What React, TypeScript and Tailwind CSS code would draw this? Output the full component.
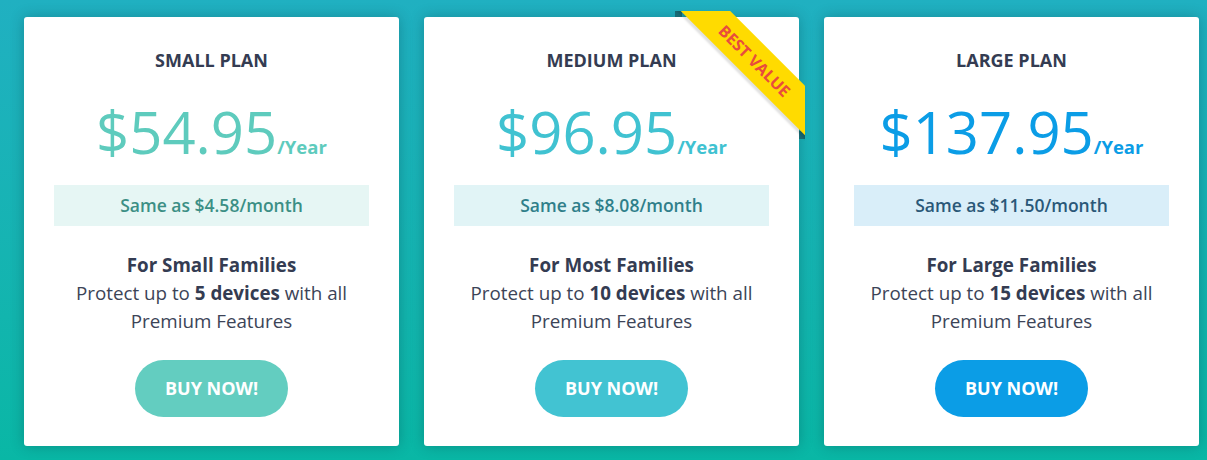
import React from "react";

type Plan = {
  name: string;
  price: string;
  month: string;
  family: string;
  devices: string;
  priceColor: string;
  boxBg: string;
  boxText: string;
  btn: string;
  ribbon?: boolean;
};

const plans: Plan[] = [
  {
    name: "SMALL PLAN",
    price: "$54.95",
    month: "Same as $4.58/month",
    family: "For Small Families",
    devices: "5 devices",
    priceColor: "text-[#5ecbbd]",
    boxBg: "bg-[#e6f6f4]",
    boxText: "text-[#3b8f85]",
    btn: "bg-[#63cdc0]",
  },
  {
    name: "MEDIUM PLAN",
    price: "$96.95",
    month: "Same as $8.08/month",
    family: "For Most Families",
    devices: "10 devices",
    priceColor: "text-[#40c2d1]",
    boxBg: "bg-[#e1f4f6]",
    boxText: "text-[#2f7f8a]",
    btn: "bg-[#42c3d2]",
    ribbon: true,
  },
  {
    name: "LARGE PLAN",
    price: "$137.95",
    month: "Same as $11.50/month",
    family: "For Large Families",
    devices: "15 devices",
    priceColor: "text-[#0b9de6]",
    boxBg: "bg-[#d9eef9]",
    boxText: "text-[#2a5878]",
    btn: "bg-[#0b9de6]",
  },
];

function Ribbon() {
  return (
    <div className="absolute top-[-6px] right-[-6px] w-[130px] h-[130px] overflow-hidden pointer-events-none">
      <div className="absolute left-0 top-0 w-[7px] h-[6px] bg-[#176a74]" />
      <div className="absolute right-0 top-[120px] w-[6px] h-[8px] bg-[#176a74]" />
      <div className="absolute left-[-20px] top-[32px] w-[200px] h-[35px] rotate-45 bg-[#ffdb00] shadow-[0_3px_2px_rgba(0,0,0,0.12)] flex items-center justify-center">
        <span className="text-[16px] font-bold text-[#e84c3d] leading-none">BEST VALUE</span>
      </div>
    </div>
  );
}

function Card({ p }: { p: Plan }) {
  return (
    <div className="relative w-[375px] shrink-0 bg-white rounded-[3px] shadow-[0_0_14px_rgba(0,40,50,0.28)] pt-[31px] pb-[29px] flex flex-col items-center">
      {p.ribbon && <Ribbon />}
      <div className="text-[18px] leading-[24px] font-bold text-[#343c52]">{p.name}</div>
      <div className={`mt-[30px] flex items-baseline ${p.priceColor}`}>
        <span className="text-[58px] leading-[60px] font-normal">{p.price}</span>
        <span className="text-[18.5px] font-bold">/Year</span>
      </div>
      <div
        className={`mt-[23px] w-[315px] h-[41px] flex items-center justify-center text-[17.5px] font-semibold ${p.boxBg} ${p.boxText}`}
      >
        {p.month}
      </div>
      <div className="mt-[25px] w-[315px] text-center text-[18.8px] leading-[28px] text-[#3c4457]">
        <div className="font-bold text-[#343c52]">{p.family}</div>
        <div>
          Protect up to <span className="font-bold text-[#343c52]">{p.devices}</span> with all Premium
          Features
        </div>
      </div>
      <button
        className={`mt-[25px] w-[153px] h-[57px] rounded-full text-white text-[18px] font-bold ${p.btn}`}
      >
        BUY NOW!
      </button>
    </div>
  );
}

export default function App() {
  return (
    <div
      className="w-[1207px] h-[460px] overflow-hidden bg-gradient-to-b from-[#20b0c1] to-[#09b7a5] pl-[24px] pt-[17px] flex gap-[25px] items-start"
      style={{ fontFamily: '"Open Sans", "Noto Sans", sans-serif' }}
    >
      {plans.map((p) => (
        <Card key={p.name} p={p} />
      ))}
    </div>
  );
}
